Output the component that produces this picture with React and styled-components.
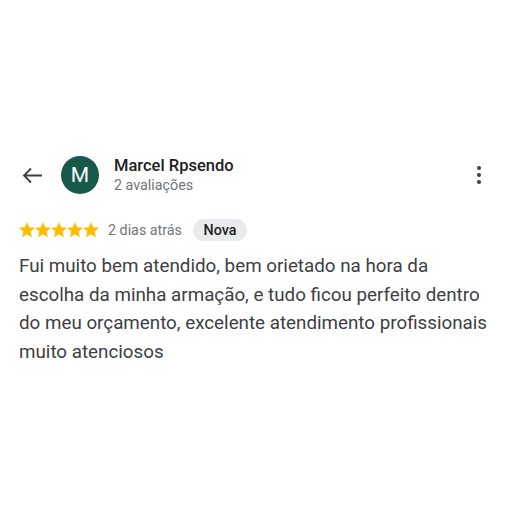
import React from "react";
import styled, { createGlobalStyle } from "styled-components";

const GlobalStyle = createGlobalStyle`
  html, body {
    margin: 0;
    padding: 0;
    background: #ffffff;
  }
  body {
    font-family: Roboto, "Noto Sans", Arial, sans-serif;
  }
`;

const Page = styled.div`
  width: 512px;
  height: 512px;
  box-sizing: border-box;
  padding: 155px 0 0 19px;
`;

const Header = styled.div`
  display: flex;
  align-items: center;
  height: 40px;
  padding-right: 31px;
`;

const BackButton = styled.div`
  width: 26px;
  height: 40px;
  display: flex;
  align-items: center;
  justify-content: center;
  margin-right: 16px;
  color: #3c4043;
`;

const Avatar = styled.div`
  width: 38px;
  height: 38px;
  border-radius: 50%;
  background: #17594a;
  color: #ffffff;
  display: flex;
  align-items: center;
  justify-content: center;
  font-size: 21px;
  font-weight: 400;
  margin-right: 15px;
`;

const Author = styled.div`
  flex: 1;
  display: flex;
  flex-direction: column;
`;

const Name = styled.div`
  font-size: 16.5px;
  font-weight: 500;
  color: #202124;
  line-height: 20px;
`;

const Meta = styled.div`
  font-size: 14.3px;
  color: #70757a;
  line-height: 18px;
`;

const MoreButton = styled.div`
  display: flex;
  flex-direction: column;
  gap: 3px;
  align-items: center;
`;

const Dot = styled.span`
  width: 4px;
  height: 4px;
  border-radius: 50%;
  background: #3c4043;
`;

const RatingRow = styled.div`
  display: flex;
  align-items: center;
  margin-top: 24px;
  height: 22px;
`;

const Stars = styled.div`
  display: flex;
  margin-right: 9px;
`;

const Chip = styled.span`
  margin-left: 11px;
  background: #e8eaed;
  color: #202124;
  font-size: 14.3px;
  font-weight: 500;
  border-radius: 11px;
  padding: 0 10.5px;
  height: 22px;
  line-height: 22px;
`;

const Body = styled.p`
  margin: 11px 0 0 0;
  width: 478px;
  font-size: 18.8px;
  line-height: 28.5px;
  color: #3c4043;
`;

const Star = () => (
  <svg width="16" height="16" viewBox="2 2 20 20">
    <path
      fill="#fbbc04"
      d="M12 17.27L18.18 21l-1.64-7.03L22 9.24l-7.19-.61L12 2 9.19 8.63 2 9.24l5.46 4.73L5.82 21z"
    />
  </svg>
);

export default function App() {
  return (
    <>
      <GlobalStyle />
      <Page>
        <Header>
          <BackButton>
            <svg width="21" height="17" viewBox="0 0 21 17" fill="none">
              <path
                d="M20 8.5H2M9 1.5L2 8.5l7 7"
                stroke="currentColor"
                strokeWidth="1.8"
              />
            </svg>
          </BackButton>
          <Avatar>M</Avatar>
          <Author>
            <Name>Marcel Rpsendo</Name>
            <Meta>2 avaliações</Meta>
          </Author>
          <MoreButton>
            <Dot />
            <Dot />
            <Dot />
          </MoreButton>
        </Header>
        <RatingRow>
          <Stars>
            {[0, 1, 2, 3, 4].map((i) => (
              <Star key={i} />
            ))}
          </Stars>
          <Meta>2 dias atrás</Meta>
          <Chip>Nova</Chip>
        </RatingRow>
        <Body>
          Fui muito bem atendido, bem orietado na hora da escolha da minha
          armação, e tudo ficou perfeito dentro do meu orçamento, excelente
          atendimento profissionais muito atenciosos
        </Body>
      </Page>
    </>
  );
}
